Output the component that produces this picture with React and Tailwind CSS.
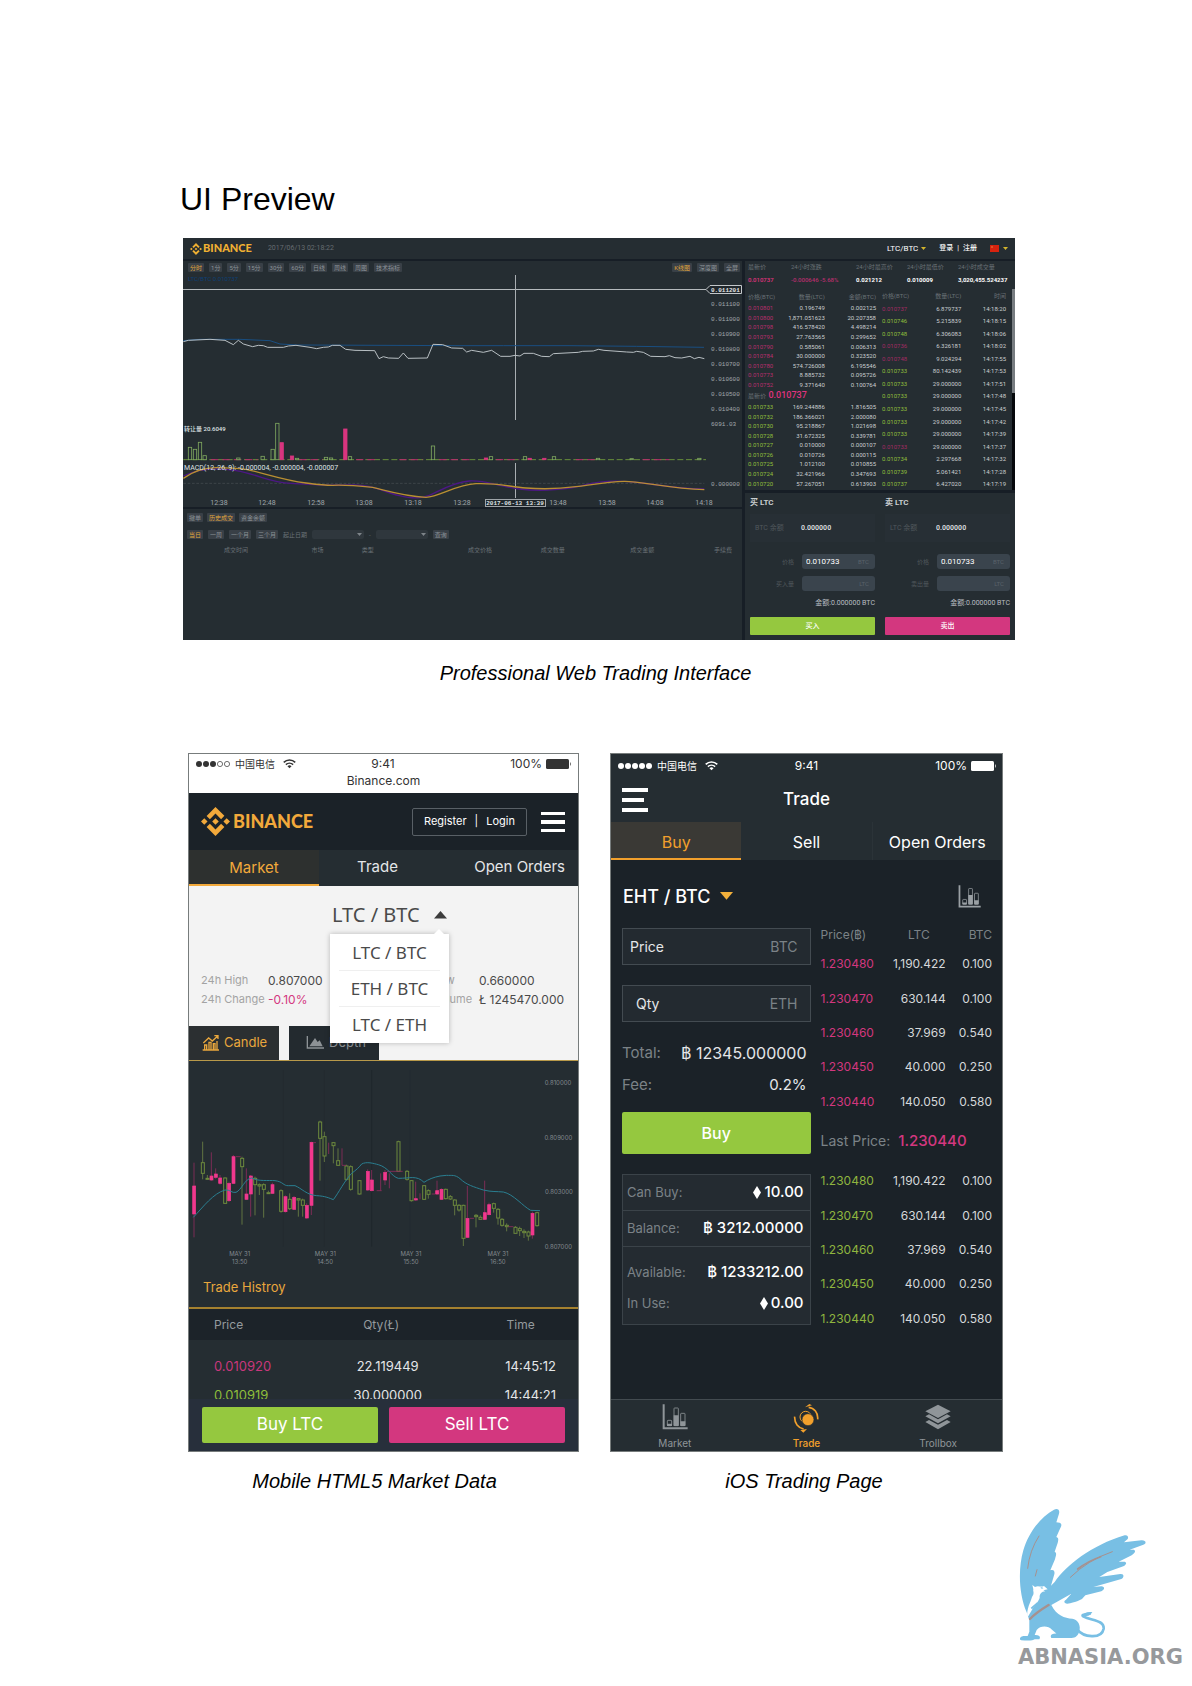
import React from "react";
import { SiBinance } from "react-icons/si";

const ARIAL = "font-['Liberation_Sans',sans-serif]";
const WEB = "font-[Roboto,'Noto_Sans_CJK_SC',sans-serif]";
const APP = "font-[Inter,'Noto_Sans_CJK_SC',sans-serif]";

/* ---------- desktop terminal ---------- */

const intervals = ["分时", "1分", "5分", "15分", "30分", "60分", "日线", "周线", "周图", "技术指标"];

const asks = [
  ["0.010801", "0.196749", "0.002125"],
  ["0.010800", "1,871.051623", "20.207358"],
  ["0.010798", "416.578420", "4.498214"],
  ["0.010793", "27.763565", "0.299652"],
  ["0.010790", "0.585061", "0.006313"],
  ["0.010784", "30.000000", "0.323520"],
  ["0.010780", "574.726008", "6.195546"],
  ["0.010773", "8.885732", "0.095726"],
  ["0.010752", "9.371640", "0.100764"],
];
const bids = [
  ["0.010733", "169.244886", "1.816505"],
  ["0.010732", "186.366021", "2.000080"],
  ["0.010730", "95.218867", "1.021698"],
  ["0.010728", "31.672325", "0.339781"],
  ["0.010727", "0.010000", "0.000107"],
  ["0.010726", "0.010726", "0.000115"],
  ["0.010725", "1.012100", "0.010855"],
  ["0.010724", "32.421966", "0.347693"],
  ["0.010720", "57.267051", "0.613903"],
];
const trades = [
  ["0.010737", "6.879737", "14:18:20", 1],
  ["0.010746", "5.215839", "14:18:15", 0],
  ["0.010748", "6.306083", "14:18:06", 0],
  ["0.010736", "6.326181", "14:18:02", 1],
  ["0.010748", "9.024294", "14:17:55", 1],
  ["0.010733", "80.142439", "14:17:53", 0],
  ["0.010733", "29.000000", "14:17:51", 0],
  ["0.010733", "29.000000", "14:17:48", 0],
  ["0.010733", "29.000000", "14:17:45", 0],
  ["0.010733", "29.000000", "14:17:42", 0],
  ["0.010733", "29.000000", "14:17:39", 0],
  ["0.010733", "29.000000", "14:17:37", 1],
  ["0.010734", "2.297668", "14:17:32", 0],
  ["0.010739", "5.061421", "14:17:28", 0],
  ["0.010737", "6.427020", "14:17:19", 0],
];

const scale = [
  [304, "0.011100"], [319, "0.011000"], [334, "0.010900"], [349, "0.010800"], [364, "0.010700"],
  [379, "0.010600"], [394, "0.010500"], [409, "0.010400"], [424, "6091.03"], [484, "0.000000"],
];
const times = [
  [219, "12:38"], [267, "12:48"], [316, "12:58"], [364, "13:08"], [413, "13:18"], [462, "13:28"],
  [558, "13:48"], [607, "13:58"], [655, "14:08"], [704, "14:18"],
];
const volumes = [
  [37, 142, 0], [52, 148, 0], [67, 127, 0], [81, 167, 0], [182, 174, 0], [255, 169, 0], [285, 148, 0],
  [299, 70, 0], [312, 128, 1], [343, 168, 1], [358, 175, 0], [445, 172, 0], [460, 174, 0], [503, 87, 1],
  [517, 170, 0], [766, 138, 0], [925, 174, 1], [940, 170, 0], [1042, 170, 0], [1056, 175, 1],
  [1100, 175, 1], [1129, 170, 0], [1261, 175, 0], [1362, 176, 0], [1565, 175, 0],
];

function PriceChart() {
  return (
    <svg viewBox="183 273 559 234" className="block w-full" role="img" aria-label="LTC/BTC chart">
      <text x="188" y="281" fontSize="6" fill="#0d4076">LTC/BTC 0.010737</text>
      <path d="M183 289.5H706" stroke="#b5babd" />
      <path d="M515.5 275V420M515.5 463V498" stroke="#a9aeb2" />
      <g fill="none" strokeLinejoin="round">
        <path transform="translate(170 170) scale(.33333)" strokeWidth="3" stroke="#194e82"
          d="M40 512L90 508L210 508L300 512L330 522L380 525L870 527L1000 527L1200 527L1400 529L1602 532" />
        <path transform="translate(170 170) scale(.33333)" strokeWidth="3" stroke="#b9c0c4"
          d="M40 515L55 511L120 508L165 511L190 524L205 511L220 522L248 530L265 526L280 527L293 532L340 532L355 528L378 526L420 532L440 536L460 532L475 531L487 526L510 526L527 538L555 541L614 542L627 566L640 560L655 564L686 565L700 549L714 565L772 564L789 523L818 524L845 534L878 535" />
        <path transform="translate(460 230) scale(.33333)" strokeWidth="3" stroke="#b9c0c4"
          d="M8 355L20 366L35 361L70 367L95 361L122 379L150 379L165 376L180 378L192 370L220 370L245 379L268 380L280 371L355 367L368 364L400 363L415 358L432 361L500 366L520 367L530 364L550 367L572 379L615 380L628 377L645 383L665 384L690 379L703 386L717 382L733 386" />
      </g>
      <g transform="translate(176 400) scale(.33333)">
        <path d="M22 179H1590" stroke="#68903b" strokeWidth="3" strokeDasharray="18 8" />
        <path d="M105 179H245M370 179H440M540 179H600M670 179H740M790 179H890M960 179H1030M1200 179H1260M1400 179H1480" stroke="#b82d6d" strokeWidth="3" strokeDasharray="22 12" />
        {volumes.map(([x, y, red]) => (
          <rect key={x} x={x} y={y} width="10" height={179 - y} fill={red ? "#d8357f" : "#252d32"} stroke={red ? "#d8357f" : "#7fa75f"} strokeWidth="2.5" />
        ))}
        <path d="M22 250H1585" stroke="#4a5054" strokeWidth="2" strokeDasharray="8 5" />
        <g fill="none" strokeWidth="4">
          <path stroke="#4c1785" d="M22 228C60 210 110 200 180 212S280 248 345 250S450 258 520 255S620 275 670 287S740 293 760 286S830 246 880 243S960 258 1030 267S1180 268 1230 254S1330 240 1400 249S1520 268 1585 267" />
          <path stroke="#b98f32" d="M22 235C55 212 90 203 120 203C160 203 180 204 210 208C260 218 320 240 390 249C420 253 440 256 470 256C510 254 560 259 590 262C640 274 680 288 750 292C790 290 840 254 900 251S1000 260 1050 264S1140 268 1200 260S1300 245 1345 244S1480 265 1585 269" />
        </g>
      </g>
      <g fill="#a3a9ad" fontSize="6" fontFamily="'Liberation Mono',monospace">
        {scale.map(([y, t]) => <text key={t} x="711" y={y + 2}>{t}</text>)}
      </g>
      <path d="M706 289.5L710 285.5H741.5V293.5H710Z" fill="#20272c" stroke="#c3c7ca" />
      <text x="711" y="292" fontSize="6" fontWeight="700" fill="#e4e6e8" fontFamily="'Liberation Mono',monospace">0.011201</text>
      <g fill="#dfe2e4">
        <text x="184" y="431" fontSize="6" fontWeight="500">转让量 20.6049</text>
        <text x="184" y="470" fontSize="7">MACD(12, 26, 9): -0.000004, -0.000004, -0.000007</text>
      </g>
      <g fill="#a0a6aa" fontSize="7" textAnchor="middle">
        {times.map(([x, t]) => <text key={t} x={x} y="505">{t}</text>)}
      </g>
      <rect x="485.5" y="499.5" width="60" height="7" fill="#20272c" stroke="#9ea4a8" />
      <text x="515" y="505" fontSize="6" fontWeight="700" fill="#dfe2e4" textAnchor="middle" fontFamily="'Liberation Mono',monospace">2017-06-13 13:39</text>
    </svg>
  );
}

function Chip({ children, active }) {
  return (
    <button className={`h-[9px] rounded-[1px] bg-[#394047] px-[2px] text-[6px] leading-[9px] ${active ? "text-[#e0a63c]" : "text-[#8d9499]"}`}>
      {children}
    </button>
  );
}

function Caret({ className }) {
  return (
    <svg viewBox="0 0 10 6" className={className} aria-hidden="true"><path d="M0 0H10L5 6Z" fill="currentColor" /></svg>
  );
}

function BookRows({ rows, tone }) {
  return rows.map((r) => (
    <tr key={r[0]} className="h-[9px]">
      <td className={`p-0 ${tone}`}>{r[0]}</td>
      <td className="p-0 text-right">{r[1]}</td>
      <td className="p-0 text-right">{r[2]}</td>
    </tr>
  ));
}

function OrderPanel({ id, title, balance, amount, action, tone }) {
  const field = "h-[15px] w-[73px] rounded-[3px] bg-[#3a444d] pl-[4px] text-[8px] text-white outline-none";
  return (
    <form className="flex flex-col" onSubmit={(e) => e.preventDefault()}>
      <h3 className="h-5 text-[8px] leading-5 font-bold text-[#c9cdd0]">{title}</h3>
      <div className="mt-px flex h-7 items-center bg-[#272f35] pl-[5px] text-[7px]">
        <span className="w-[46px] text-[#50575c]">{balance}</span>
        <span className="font-bold text-[#d3d7da]">0.000000</span>
      </div>
      <div className="mt-3 flex items-center justify-end gap-2">
        <label htmlFor={`${id}-price`} className="text-[6px] text-[#50575c]">价格</label>
        <div className="relative flex">
          <input id={`${id}-price`} className={field} defaultValue="0.010733" />
          <span className="absolute top-[3px] right-[6px] text-[6px] leading-[9px] text-[#59626a]">BTC</span>
        </div>
      </div>
      <div className="mt-[7px] flex items-center justify-end gap-2">
        <label htmlFor={`${id}-qty`} className="text-[6px] text-[#50575c]">{amount}</label>
        <div className="relative flex">
          <input id={`${id}-qty`} className={field} />
          <span className="absolute top-[3px] right-[6px] text-[6px] leading-[9px] text-[#59626a]">LTC</span>
        </div>
      </div>
      <p className="h-[26px] text-right text-[7px] leading-[24px] text-[#b9bec2]">金额:0.000000 BTC</p>
      <button className={`h-[18px] rounded-[1px] text-[7px] font-medium text-white ${tone}`}>{action}</button>
    </form>
  );
}

function Terminal() {
  const pill = "h-[9px] w-[52px] appearance-none rounded-[2px] bg-[#2f373d]";
  return (
    <section className={`${WEB} bg-[#252d32] text-[#c9cdd0]`}>
      <header className="flex h-[23px] items-center border-b-2 border-[#171e26] pr-[7px] pl-[7px]">
        <SiBinance className="h-3 w-3 text-[#f0b032]" />
        <span className="ml-px font-[Lato,sans-serif] text-[11px] font-black text-[#f0b032]">BINANCE</span>
        <time className="ml-4 text-[7px] text-[#666c71]">2017/06/13 02:18:22</time>
        <button className="ml-auto flex items-center gap-[3px] text-[8px] text-white">LTC/BTC <Caret className="w-[5px] text-[#d3b52c]" /></button>
        <nav className="ml-[13px] flex gap-[4px] text-[7px] font-medium text-white"><a href="#login">登录</a><span>|</span><a href="#register">注册</a></nav>
        <button aria-label="中文" className="ml-[13px] flex items-center gap-[4px]">
          <svg viewBox="0 0 9 7" className="w-[9px]"><path d="M0 0H9V7H0Z" fill="#d7230f" /><circle cx="2" cy="2" r="1" fill="#e2642c" /></svg>
          <Caret className="w-[5px] text-[#d3b52c]" />
        </button>
      </header>

      <div className="grid grid-cols-[559fr_273fr]">
        <div className="flex flex-col">
          <div className="flex h-3 items-center gap-[5px] pt-px pl-[5px]">
            {intervals.map((t, i) => <Chip key={t} active={i === 0}>{t}</Chip>)}
            <span className="ml-auto flex gap-[5px] pr-[2px]"><Chip active>K线图</Chip><Chip>深度图</Chip><Chip>全屏</Chip></span>
          </div>
          <PriceChart />
          <div className="border-t-2 border-[#171e26] pt-1">
            <div className="flex gap-[4px] pl-[4px]"><Chip>撤单</Chip><Chip active>历史成交</Chip><Chip>资金余额</Chip></div>
            <div className="mt-[8px] flex items-center gap-[5px] pl-[4px] text-[6px] leading-[9px] text-[#6a7176]">
              <Chip active>当日</Chip><Chip>一周</Chip><Chip>一个月</Chip><Chip>三个月</Chip>
              <span>起止日期</span>
              <span className="relative flex text-[#7d8489]"><select aria-label="开始日期" className={pill} /><Caret className="absolute top-[3px] right-[2px] w-[5px]" /></span>
              <span>-</span>
              <span className="relative flex text-[#7d8489]"><select aria-label="结束日期" className={pill} /><Caret className="absolute top-[3px] right-[2px] w-[5px]" /></span>
              <Chip>查询</Chip>
            </div>
            <table className="mt-[6px] w-full table-fixed text-[6px] leading-[9px] whitespace-nowrap text-[#6a7176]">
              <thead>
                <tr className="*:p-0 *:text-left *:font-normal">
                  <th className="w-[23%] pl-[41px]!">成交时间</th><th className="w-[9%]">市场</th><th className="w-[19%]">类型</th>
                  <th className="w-[13%]">成交价格</th><th className="w-[16%]">成交数量</th><th className="w-[15%]">成交金额</th><th className="w-[5%]">手续费</th>
                </tr>
              </thead>
            </table>
          </div>
        </div>

        <div className="flex flex-col border-l-[3px] border-[#171e26]">
          <dl className="grid grid-cols-[43fr_65fr_51fr_51fr_57fr] pl-[3px] text-[6px] leading-3 *:whitespace-nowrap">
            <div><dt className="text-[#6a7176]">最新价</dt><dd className="leading-[14px] font-medium text-[#e0337f]">0.010737</dd></div>
            <div><dt className="text-[#6a7176]">24小时涨跌</dt><dd className="leading-[14px] font-medium text-[#b82d6d]">-0.000646 -5.68%</dd></div>
            <div><dt className="text-[#6a7176]">24小时最高价</dt><dd className="leading-[14px] font-bold text-white">0.021212</dd></div>
            <div><dt className="text-[#6a7176]">24小时最低价</dt><dd className="leading-[14px] font-bold text-white">0.010009</dd></div>
            <div><dt className="text-[#6a7176]">24小时成交量</dt><dd className="leading-[14px] font-bold text-white">3,020,455.524237</dd></div>
          </dl>
          <div className="mt-[2px] grid grid-cols-[128fr_124fr_3fr] items-start gap-[6px] pl-[3px] text-[6px] leading-[9px]">
            <table className="h-[199px] w-full table-fixed border-collapse">
              <thead><tr className="h-[14px] text-[#6a7176] *:p-0 *:font-normal"><th className="w-[30%] text-left">价格(BTC)</th><th className="w-[30%] text-right">数量(LTC)</th><th className="w-[40%] text-right">金额(BTC)</th></tr></thead>
              <tbody>
                <BookRows rows={asks} tone="text-[#b82d6d]" />
                <tr className="h-[12px]"><td colSpan="3" className="p-0 text-[#6a7176]">最新价 <strong className="ml-px text-[9px] font-medium text-[#e0337f]">0.010737</strong></td></tr>
                <BookRows rows={bids} tone="text-[#8fbe3c]" />
              </tbody>
            </table>
            <table className="h-[201px] w-full table-fixed border-collapse">
              <thead><tr className="h-[13px] text-[#6a7176] *:p-0 *:font-normal"><th className="w-[32%] text-left">价格(BTC)</th><th className="w-[32%] text-right">数量(LTC)</th><th className="w-[36%] text-right">时间</th></tr></thead>
              <tbody>
                {trades.map(([p, q, t, red]) => (
                  <tr key={t} className="h-[12px]">
                    <td className={`p-0 ${red ? "text-[#a32b62]" : "text-[#8fbe3c]"}`}>{p}</td>
                    <td className="p-0 text-right">{q}</td>
                    <td className="p-0 text-right">{t}</td>
                  </tr>
                ))}
              </tbody>
            </table>
            <div className="h-[201px] bg-[#05080b]"><div className="h-[104px] bg-[#777c80]" /></div>
          </div>
          <div className="grid grid-cols-2 gap-[10px] border-t-[3px] border-[#171e26] px-[5px] pb-[5px]">
            <OrderPanel id="buy" title="买 LTC" balance="BTC 余额" amount="买入量" action="买入" tone="bg-[#95c83f]" />
            <OrderPanel id="sell" title="卖 LTC" balance="LTC 余额" amount="卖出量" action="卖出" tone="bg-[#d3377f]" />
          </div>
        </div>
      </div>
    </section>
  );
}

/* ---------- shared phone parts ---------- */

function StatusBar({ filled, className }) {
  return (
    <div className={`grid grid-cols-[1fr_auto_1fr] items-center text-[12px] ${className}`}>
      <div className="flex items-center gap-1">
        <svg viewBox="0 0 36 8" className="w-9" aria-hidden="true">
          {[0, 1, 2, 3, 4].map((i) => (
            <circle key={i} cx={4 + i * 7} cy="4" r={i < filled ? 3 : 2.6} fill={i < filled ? "currentColor" : "none"} stroke="currentColor" strokeWidth={i < filled ? 0 : 0.7} />
          ))}
        </svg>
        <span className="text-[10px]">中国电信</span>
        <svg viewBox="0 0 14 10" className="ml-1 w-[13px]" fill="none" stroke="currentColor" strokeWidth="1.7" aria-hidden="true">
          <path d="M.8 3.6C4.3.3 9.7.3 13.2 3.6M3.1 6.1C5.3 4 8.7 4 10.9 6.1" /><path d="M7 10L4.8 7.7Q7 6 9.2 7.7Z" fill="currentColor" stroke="none" />
        </svg>
      </div>
      <span>9:41</span>
      <div className="flex items-center justify-end gap-1">
        100%
        <svg viewBox="0 0 25 10" className="w-[25px]" fill="currentColor" aria-hidden="true"><rect width="23" height="10" rx="1.5" /><path d="M24 3Q25.5 5 24 7Z" /></svg>
      </div>
    </div>
  );
}

/* ---------- phone: market data ---------- */

// x, up(0)/down(1), body top, body bottom, wick top, wick bottom
const candles = [
  [42, 1, 378, 462, 308, 532], [68, 0, 308, 340, 245, 358], [82, 0, 355, 358, 345, 360], [94, 1, 348, 360, 277, 362],
  [107, 1, 342, 352, 325, 356], [120, 1, 354, 370, 345, 374], [135, 0, 354, 430, 352, 432], [147, 1, 370, 422, 365, 426],
  [160, 1, 290, 370, 285, 372], [186, 0, 295, 320, 290, 494], [199, 1, 402, 418, 325, 420], [212, 1, 348, 402, 345, 470],
  [225, 0, 355, 374, 350, 466], [238, 0, 374, 378, 370, 405], [251, 0, 374, 388, 370, 473], [265, 0, 398, 401, 392, 402],
  [277, 1, 374, 400, 368, 402], [303, 0, 392, 454, 388, 458], [316, 1, 410, 455, 406, 458], [329, 0, 418, 446, 400, 450],
  [342, 1, 412, 448, 408, 450], [355, 0, 416, 420, 414, 470], [368, 0, 420, 436, 416, 470], [380, 1, 436, 474, 430, 476],
  [394, 1, 247, 436, 245, 465], [420, 0, 186, 235, 182, 362], [433, 0, 230, 288, 215, 306], [460, 0, 248, 257, 246, 310],
  [474, 0, 302, 316, 265, 318], [499, 0, 318, 358, 314, 362], [512, 0, 320, 388, 316, 392], [538, 0, 362, 402, 360, 404],
  [563, 1, 334, 390, 328, 392], [575, 1, 360, 392, 330, 394], [615, 1, 337, 360, 330, 375], [655, 0, 245, 334, 242, 336],
  [681, 0, 334, 358, 330, 362], [694, 0, 362, 422, 360, 425], [707, 1, 416, 420, 365, 422], [732, 0, 377, 418, 375, 420],
  [745, 0, 392, 403, 388, 416], [771, 1, 392, 402, 362, 405], [784, 1, 388, 418, 385, 420], [797, 0, 388, 416, 386, 418],
  [811, 0, 410, 417, 405, 420], [824, 0, 420, 436, 418, 466], [837, 0, 436, 450, 432, 455], [850, 0, 436, 535, 434, 558],
  [862, 1, 475, 532, 378, 534], [888, 0, 466, 470, 462, 502], [901, 0, 472, 478, 466, 480], [914, 1, 458, 478, 362, 480],
  [927, 1, 434, 464, 428, 466], [941, 0, 431, 445, 428, 458], [954, 0, 448, 474, 444, 494], [966, 0, 478, 496, 474, 500],
  [980, 0, 496, 500, 490, 514], [1006, 0, 502, 520, 498, 522], [1019, 0, 506, 512, 500, 528], [1032, 0, 514, 518, 508, 534],
  [1045, 0, 516, 528, 512, 542], [1057, 1, 460, 525, 455, 536], [1071, 0, 458, 497, 455, 500],
];

function CandleChart() {
  return (
    <svg viewBox="27 3 1167 630" className="block w-full" role="img" aria-label="Candle chart">
      <path d="M310 30V560M433 30V560M690 30V560" stroke="#232b30" strokeWidth="3" />
      <path d="M575 30V560" stroke="#1f262b" strokeWidth="3" />
      {candles.map(([x, red, t, b, wt, wb]) => (
        <g key={x}>
          <path d={`M${x} ${wt}V${t}M${x} ${b}V${wb}`} stroke={red ? "#8d2c5d" : "#6d8244"} strokeWidth="2.5" />
          <rect x={x - 4} y={t} width="9" height={b - t} fill={red ? "#f0388d" : "#252d32"} stroke={red ? "#f0388d" : "#6d8a3d"} strokeWidth={red ? 2 : 3} />
        </g>
      ))}
      <path d="M168 290H182M400 248H408M446 248V282M486 265V316H498M602 392V340M628 385V340M590 392H605M620 334H668M755 402H765M720 400V418M870 475H882M985 500H1000" stroke="#8d2c5d" strokeWidth="2.5" fill="none" />
      <path d="M40 472C70 440 100 400 135 390C150 388 155 400 168 397C185 390 195 355 215 354C235 365 265 360 285 362C310 365 310 378 325 377H345C365 385 380 405 410 407C435 408 450 415 460 419C475 400 495 360 515 340C530 328 535 325 545 312C560 304 580 310 595 314C625 322 635 350 655 355C690 355 710 345 732 367C745 358 760 352 780 348L800 346C815 347 825 343 840 356C860 375 880 380 910 390C935 396 950 394 970 396C1000 402 1030 440 1052 451L1080 452" fill="none" stroke="#2a7f91" strokeWidth="3" />
      <g fill="#838a8f" textAnchor="middle">
        {[[1134, 75, "0.810000"], [1135, 239, "0.809000"], [1137, 403, "0.803000"], [1135, 566, "0.807000"]].map(([x, y, t]) => <text key={t} x={x} y={y} fontSize="18">{t}</text>)}
        {[[179, "13:50"], [436, "14:50"], [693, "15:50"], [954, "16:50"]].map(([x, t]) => (
          <React.Fragment key={t}><text x={x} y="588" fontSize="18">MAY 31</text><text x={x} y="611" fontSize="18">{t}</text></React.Fragment>
        ))}
      </g>
    </svg>
  );
}

function MarketPhone() {
  return (
    <section className={`${APP} flex flex-col overflow-hidden border border-[#777c7c] bg-[#252d32]`}>
      <div className="h-[39px] bg-white text-[#333]">
        <StatusBar filled={3} className="h-5 pr-[7px] pl-[6px]" />
        <p className="text-center text-[12px] leading-[13px]">Binance.com</p>
      </div>
      <header className="flex h-[57px] items-center bg-[#1b2228] pr-[13px] pl-3">
        <SiBinance className="h-[29px] w-[29px] text-[#f2a93b]" />
        <span className="ml-[3px] font-[Lato,sans-serif] text-[18px] font-black text-[#f2a93b]">BINANCE</span>
        <div className="ml-auto flex h-7 items-center gap-2 rounded-[2px] border border-[#596066] px-[11px] text-[11px] text-white">
          <a href="#register">Register</a><span>|</span><a href="#login">Login</a>
        </div>
        <button aria-label="Menu" className="ml-[14px] flex w-6 flex-col gap-[5px] text-white">
          <i className="h-[3px] w-full bg-white" /><i className="h-[4px] w-full bg-white" /><i className="h-[3px] w-full bg-white" />
        </button>
      </header>
      <nav className="grid h-9 grid-cols-[130fr_117fr_142fr] text-[15px] text-[#e4e6e8]">
        <a href="#market" className="border-b-2 border-[#f2a93b] bg-[#2d302f] pt-[2px] text-center leading-[32px] text-[#f2a93b]">Market</a>
        <a href="#trade" className="text-center leading-[34px]">Trade</a>
        <a href="#orders" className="pr-[13px] text-right leading-[34px]">Open Orders</a>
      </nav>
      <div className="flex h-[175px] flex-col border-b border-[#b8994a] bg-[#f3f3f3] text-[#4a4a4a]">
        <div className="relative mx-auto mt-[15px] ml-[143px] font-['Noto_Sans',sans-serif]">
          <button className="flex h-7 items-center gap-[14px] text-[20px] leading-7">
            LTC / BTC
            <svg viewBox="0 0 12 7" className="w-[13px]" aria-hidden="true"><path d="M0 7L6 0L12 7Z" fill="#3c3c3c" /></svg>
          </button>
          <ul className="absolute top-[33px] left-[-2px] z-10 w-[119px] bg-white px-[9px] py-[1px] text-center text-[17px] leading-[35px] shadow-[0_0_5px_rgba(0,0,0,0.25)]">
            <svg viewBox="0 0 12 6" className="absolute -top-[5px] right-[4px] w-3" aria-hidden="true"><path d="M0 6L6 0L12 6Z" fill="#fff" /></svg>
            <li className="border-b border-[#efefef]"><a href="#ltcbtc">LTC / BTC</a></li>
            <li className="border-b border-[#efefef]"><a href="#ethbtc">ETH / BTC</a></li>
            <li><a href="#ltceth">LTC / ETH</a></li>
          </ul>
        </div>
        <dl className="mt-[42px] grid grid-cols-[67px_142px_69px_auto] justify-start pl-3 text-[12px] leading-[19px] whitespace-nowrap">
          <dt className="text-[11px] text-[#a3a3a3]">24h High</dt><dd>0.807000</dd>
          <dt className="text-[11px] text-[#a3a3a3]">24h Low</dt><dd>0.660000</dd>
          <dt className="text-[11px] text-[#a3a3a3]">24h Change</dt><dd className="text-[#d3377f]">-0.10%</dd>
          <dt className="text-[11px] text-[#a3a3a3]">24h Volume</dt><dd>Ł 1245470.000</dd>
        </dl>
        <div className="mt-auto flex gap-[10px]">
          <button className="flex h-[34px] w-[90px] items-center gap-1 bg-[#2b2f31] pl-[13px] text-[13px] text-[#e9a73d]">
            <svg viewBox="66 866 54 48" className="w-[18px]" fill="none" stroke="currentColor" strokeWidth="4" aria-hidden="true">
              <path d="M68 911H117M74 911V896H80V911M87 911V888H93V911M100 911V892H105V911M111 911V884M70 890L86 875L97 884L113 869M103 868H114V878" />
            </svg>
            Candle
          </button>
          <button className="flex h-[34px] w-[90px] items-center gap-[5px] bg-[#232a2f] pl-[17px] text-[13px] text-[#8d9296]">
            <svg viewBox="376 872 54 40" className="w-[18px]" aria-hidden="true"><path d="M380 872V908H430" stroke="currentColor" strokeWidth="4" fill="none" /><path d="M386 903L403 878L411 890L417 885L426 903Z" fill="currentColor" /></svg>
            Depth
          </button>
        </div>
      </div>
      <CandleChart />
      <h3 className="h-[38px] border-b-2 border-[#a5812f] pt-[6px] pl-[14px] text-[13px] leading-[20px] text-[#e9a73d]">Trade Histroy</h3>
      <div className="h-[90px] overflow-hidden">
        <table className="w-full table-fixed text-[13px] whitespace-nowrap text-[#e4e6e8]">
          <thead className="bg-[#1c2329] text-[12px] text-[#949a9e]">
            <tr className="h-[31px] *:p-0 *:font-normal"><th className="w-[29%] pl-[25px]! text-left">Price</th><th className="w-[39%] pl-[7px]!">Qty(Ł)</th><th className="w-[32%] pl-[53px]! text-left">Time</th></tr>
          </thead>
          <tbody>
            <tr className="h-[41px]"><td className="p-0 pt-3 pl-[25px] text-[#c9377c]">0.010920</td><td className="p-0 pt-3 pl-5 text-center">22.119449</td><td className="p-0 pt-3 pr-[22px] text-right">14:45:12</td></tr>
            <tr className="h-[29px] align-top"><td className="p-0 pt-[5px] pl-[25px] text-[#8fbe3c]">0.010919</td><td className="p-0 pt-[5px] pl-5 text-center">30.000000</td><td className="p-0 pt-[5px] pr-[22px] text-right">14:44:21</td></tr>
          </tbody>
        </table>
      </div>
      <div className="grid grid-cols-2 gap-[11px] bg-[#272f3b] px-[13px] pt-2 pb-2 text-[17px] text-white">
        <button className="h-9 rounded-[2px] bg-[#95c83f]">Buy LTC</button>
        <button className="h-9 rounded-[2px] bg-[#d3377f]">Sell LTC</button>
      </div>
    </section>
  );
}

/* ---------- phone: trading ---------- */

const levels = [
  ["1.230480", "1,190.422", "0.100"],
  ["1.230470", "630.144", "0.100"],
  ["1.230460", "37.969", "0.540"],
  ["1.230450", "40.000", "0.250"],
  ["1.230440", "140.050", "0.580"],
];

function BarsIcon({ className }) {
  return (
    <svg viewBox="184 224 78 78" className={className} aria-hidden="true">
      <path d="M189 225V297H261" fill="none" stroke="currentColor" strokeWidth="6" />
      <g fill="none" stroke="currentColor" strokeWidth="2.5"><rect x="200" y="273" width="13" height="16" rx="2" /><rect x="220" y="236" width="13" height="53" rx="2" /><rect x="240" y="252" width="13" height="37" rx="2" /></g>
      <path d="M199 283H214V290H199ZM219 258H234V290H219ZM239 276H254V290H239Z" fill="currentColor" />
    </svg>
  );
}

function TradeIcon({ className }) {
  return (
    <svg viewBox="580 224 78 86" className={className} aria-hidden="true">
      <circle cx="618" cy="263" r="17" fill="none" stroke="currentColor" strokeWidth="3" />
      <circle cx="625" cy="271" r="18" fill="currentColor" stroke="#252d32" strokeWidth="2" />
      <path d="M585 262C584 282 596 296 612 299M654 270C656 250 643 236 627 234" fill="none" stroke="currentColor" strokeWidth="5" />
      <path d="M602 302L622 299L611 310ZM637 228L616 234L629 224Z" fill="currentColor" />
    </svg>
  );
}

function LayersIcon({ className }) {
  return (
    <svg viewBox="978 226 78 78" className={className} fill="currentColor" aria-hidden="true">
      <path d="M1017 228L1055 248L1017 268L979 248Z" />
      <path d="M979 263L990 257L1017 272L1044 257L1055 263L1017 284Z" />
      <path d="M979 280L990 274L1017 288L1044 274L1055 280L1017 302Z" />
    </svg>
  );
}

function Diamond() {
  return <svg viewBox="0 0 8 13" className="w-2" aria-hidden="true"><path d="M4 0L8 6.5L4 13L0 6.5Z" fill="#fff" /></svg>;
}

function Levels({ tone }) {
  return levels.map(([p, a, b]) => (
    <tr key={p} className="h-[34px]"><td className={`p-0 ${tone}`}>{p}</td><td className="p-0 text-right">{a}</td><td className="p-0 text-right">{b}</td></tr>
  ));
}

function TradePhone() {
  const field = "flex h-[37px] items-center justify-between border border-[#434b51] bg-[#232a30] pr-3 text-[14px] text-[#7b8287]";
  const row = "flex items-center justify-between";
  const value = "flex items-center gap-[3px] text-[15px] font-medium text-white";
  return (
    <section className={`${APP} flex flex-col border border-[#777c7c] bg-[#1b2228] text-white`}>
      <div className="bg-[#252d32]">
        <StatusBar filled={5} className="h-6 pr-[6px] pl-[6px]" />
        <div className="grid h-11 grid-cols-[1fr_auto_1fr] items-center px-[11px]">
          <button aria-label="Menu" className="flex w-[26px] flex-col gap-[6px]"><i className="h-[4px] w-full bg-white" /><i className="h-[4px] w-[22px] bg-white" /><i className="h-[4px] w-full bg-white" /></button>
          <h2 className="text-[17px] font-medium">Trade</h2>
        </div>
        <nav className="grid h-[38px] grid-cols-3 text-center text-[16px] leading-10">
          <a href="#buy" className="h-[38px] border-b-2 border-[#f2a02c] bg-[#3a3935] text-[#f2a02c]">Buy</a>
          <a href="#sell" className="h-[38px]">Sell</a>
          <a href="#open" className="h-[38px] border-l border-[#2b3338]">Open Orders</a>
        </nav>
      </div>
      <div className="flex h-[68px] items-center justify-between pt-1 pr-[21px] pl-3">
        <button className="flex items-center gap-[10px] text-[18px] font-medium">EHT / BTC <Caret className="w-[13px] text-[#f2b03b]" /></button>
        <BarsIcon className="w-[23px] text-[#9aa0a4]" />
      </div>
      <div className="grid grid-cols-[188fr_171fr] items-start gap-[10px] pr-[10px] pl-[11px]">
        <form onSubmit={(e) => e.preventDefault()}>
          <div className={field}><label htmlFor="price" className="sr-only">Price</label><input id="price" placeholder="Price" className="w-24 pl-[7px] outline-none placeholder:text-[#e4e6e8]" />BTC</div>
          <div className={`${field} mt-5`}><label htmlFor="qty" className="sr-only">Qty</label><input id="qty" placeholder="Qty" className="w-24 pl-[13px] outline-none placeholder:text-[#e4e6e8]" />ETH</div>
          <p className={`${row} mt-[15px] h-8 pr-1 text-[15px] text-[#7b8287]`}>Total: <span className="text-[16px] text-[#e4e6e8]">฿ 12345.000000</span></p>
          <p className={`${row} h-8 pr-1 text-[15px] text-[#7b8287]`}>Fee: <span className="text-[#e4e6e8]">0.2%</span></p>
          <button className="mt-[11px] h-[42px] w-full rounded-[2px] bg-[#95c83f] text-[16px] font-medium">Buy</button>
          <dl className="mt-5 border border-[#3b4349] bg-[#242b31] text-[13px] text-[#7b8287]">
            <div className={`${row} h-[36px] border-b border-[#3b4349] pr-[6px] pl-[4px]`}><dt>Can Buy:</dt><dd className={value}><Diamond />10.00</dd></div>
            <div className={`${row} h-[36px] border-b border-[#3b4349] pr-[6px] pl-[4px]`}><dt>Balance:</dt><dd className={value}>฿ 3212.00000</dd></div>
            <div className={`${row} mt-[10px] h-[31px] pr-[6px] pl-[4px]`}><dt>Available:</dt><dd className={value}>฿ 1233212.00</dd></div>
            <div className={`${row} mb-[5px] h-[31px] pr-[6px] pl-[4px]`}><dt>In Use:</dt><dd className={value}><Diamond />0.00</dd></div>
          </dl>
        </form>
        <table className="h-[408px] w-full table-fixed border-collapse text-[12px] text-[#d5d8da]">
          <thead><tr className="h-[19px] leading-[13px] text-[#7b8287] *:p-0 *:align-top *:font-normal"><th className="w-[33%] text-left">Price(฿)</th><th className="w-[40%] pr-4! text-right">LTC</th><th className="w-[27%] text-right">BTC</th></tr></thead>
          <tbody>
            <Levels tone="text-[#d3377f]" />
            <tr className="h-[45px]"><td colSpan="3" className="p-0 text-[14px] text-[#7b8287]">Last Price: <strong className="ml-1 text-[15px] font-medium text-[#d3377f]">1.230440</strong></td></tr>
            <Levels tone="text-[#8fb53f]" />
          </tbody>
        </table>
      </div>
      <nav className="mt-auto grid h-[52px] grid-cols-[128fr_136fr_128fr] border-t border-[#434b50] bg-[#252d32] pt-1 text-[10px] leading-[14px] text-[#8f9599]">
        <a href="#m" className="flex flex-col items-center justify-between pb-px"><BarsIcon className="w-[26px]" />Market</a>
        <a href="#t" className="flex flex-col items-center justify-between pb-px font-medium text-[#f2a02c]"><TradeIcon className="w-[26px]" />Trade</a>
        <a href="#b" className="flex flex-col items-center justify-between pb-px"><LayersIcon className="w-[26px]" />Trollbox</a>
      </nav>
    </section>
  );
}

/* ---------- watermark ---------- */

function Griffin() {
  return (
    <svg viewBox="50 50 390 405" className="w-[130px]" aria-hidden="true">
      <g fill="#78bfe4">
        <path d="M76 366C52 310 50 235 66 180C82 125 120 78 158 58C170 53 176 60 173 70L165 96L175 97C183 100 180 108 176 115L165 140C173 142 171 150 169 158L160 184C168 188 163 197 161 207L147 240C157 236 161 242 159 252L149 286L160 275C195 225 270 165 370 135C380 133 382 141 379 146L368 156L420 150C434 149 437 159 426 163L385 178L397 178C406 182 399 190 391 195L352 214H370C378 217 374 224 366 228L318 245L294 260L357 251C370 250 368 262 360 266L276 290L300 288C312 290 310 298 300 303L252 315L242 326C225 335 208 339 198 340C188 339 186 333 194 328L210 310L150 344C165 375 190 384 213 385C234 389 239 410 233 425C229 440 218 443 207 443H150C144 434 154 429 166 430L152 418C140 405 116 406 106 419L100 434C114 433 119 440 114 447H100C96 452 75 451 60 450C52 447 56 439 66 437L79 437L84 424V390Z" />
      </g>
      <path d="M93 284L101 290C111 284 119 292 128 287L139 297L126 300L132 303C120 303 114 312 115 323C109 339 98 346 90 362L78 382C75 354 88 336 92 320C101 309 94 302 96 297Z" fill="#fff" />
      <path d="M117 292Q122 289 126 294Q121 296 117 292Z" fill="#78bfe4" />
      <path d="M106 343L92 357L88 352L109 334Z" fill="#78bfe4" />
      <path d="M228 418C245 440 300 449 307 415C309 389 270 391 247 379C235 370 258 375 267 369" fill="none" stroke="#78bfe4" strokeWidth="8" />
      <path d="M241 379Q246 363 273 365Q267 379 241 379Z" fill="#78bfe4" />
      <g fill="none" stroke="#a6918f" strokeLinecap="round">
        <path d="M113 137Q85 180 79 234M102 257L107 238M207 261Q260 209 333 184" strokeWidth="3" />
        <path d="M229 236Q260 212 298 199" strokeWidth="5" /><path d="M86 386C105 366 119 358 142 344" strokeWidth="7" />
      </g>
    </svg>
  );
}

const caption = `${ARIAL} text-center text-[20px] leading-6 text-black italic`;

export default function App() {
  return (
    <main className="flex min-h-screen flex-col bg-white">
      <div className="pt-[180px] pr-[177px] pl-[183px]">
        <h1 className={`${ARIAL} -ml-[3px] h-[58px] text-[32px] leading-[38px] text-black`}>UI Preview</h1>
        <Terminal />
        <p className={`${caption} mt-[21px] pr-[7px]`}>Professional Web Trading Interface</p>
        <div className="mt-[68px] grid grid-cols-[391fr_393fr] gap-x-[31px] pr-[12px] pl-[5px]">
          <MarketPhone />
          <TradePhone />
          <p className={`${caption} mt-[17px] pr-[18px]`}>Mobile HTML5 Market Data</p>
          <p className={`${caption} mt-[17px] pr-[5px]`}>iOS Trading Page</p>
        </div>
      </div>
      <footer className="mt-[14px] ml-auto w-[174px]">
        <Griffin />
        <p className="mt-[3px] font-['DejaVu_Sans',sans-serif] text-[21px] leading-6 font-bold text-[#97999c]">ABNASIA.ORG</p>
      </footer>
    </main>
  );
}
